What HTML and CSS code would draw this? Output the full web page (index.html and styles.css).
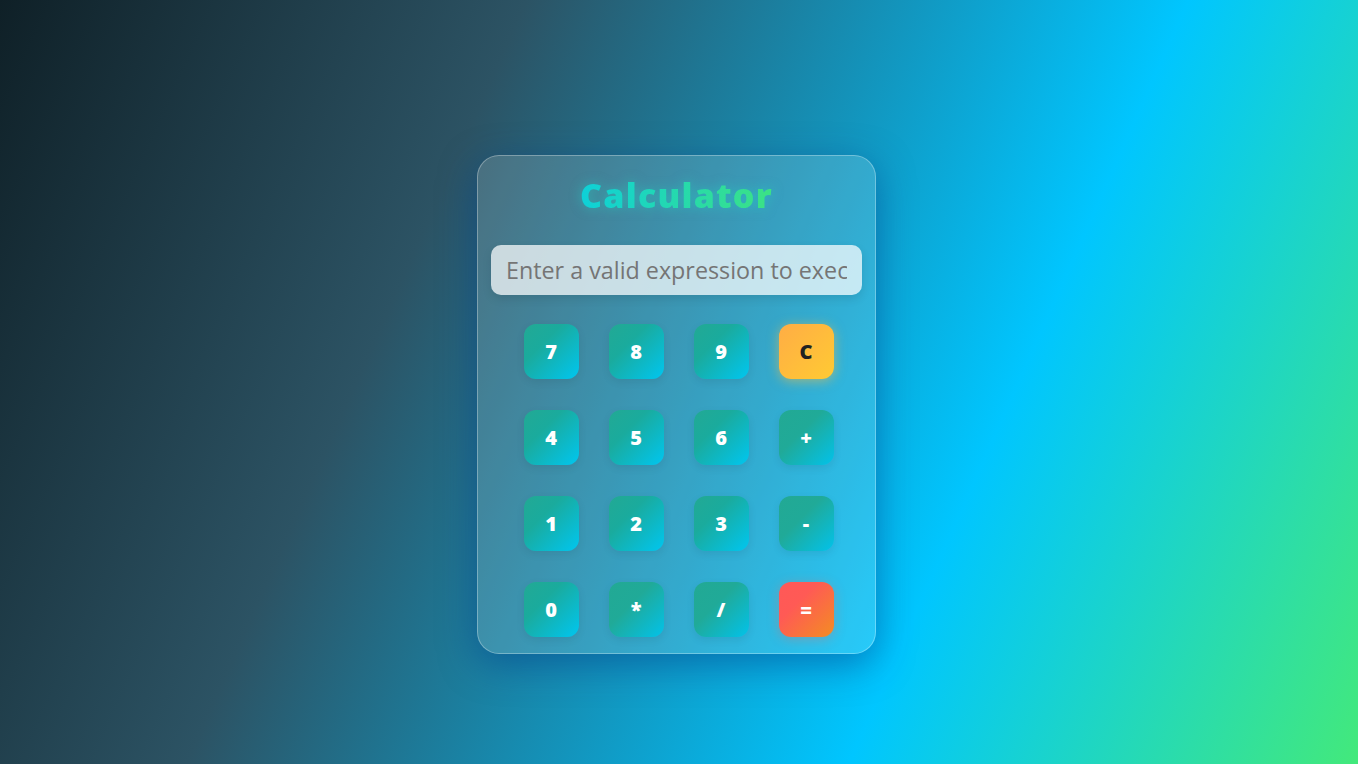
FILE: index.html
```html
<!DOCTYPE html>
<html lang="en">
<head>
<meta charset="UTF-8">
<title>Calculator</title>
<link rel="stylesheet" href="styles.css">
</head>
<body>
<main class="stage">
  <section class="calc">
    <h1 class="calc-title">Calculator</h1>
    <input class="calc-display" type="text" placeholder="Enter a valid expression to execute">
    <div class="keys">
      <button class="key">7</button>
      <button class="key">8</button>
      <button class="key">9</button>
      <button class="key key-clear">C</button>
      <button class="key">4</button>
      <button class="key">5</button>
      <button class="key">6</button>
      <button class="key key-op">+</button>
      <button class="key">1</button>
      <button class="key">2</button>
      <button class="key">3</button>
      <button class="key key-op">-</button>
      <button class="key">0</button>
      <button class="key key-op">*</button>
      <button class="key key-op">/</button>
      <button class="key key-equals">=</button>
    </div>
  </section>
</main>
</body>
</html>
```

FILE: styles.css
```css
* { box-sizing: border-box; }

html, body {
  margin: 0;
  height: 100%;
}

body {
  font-family: "Open Sans", "Noto Sans", sans-serif;
  background: linear-gradient(114deg, #0f2027 0%, #2c5364 31%, #00c6ff 70%, #43e97b 100%);
  overflow: hidden;
}

.stage {
  height: 100%;
  padding: 44px 5px 0 0;
  display: flex;
  align-items: center;
  justify-content: center;
}

.calc {
  width: 399px;
  padding: 19px 13px 16px;
  border-radius: 22px;
  background: rgba(255, 255, 255, 0.15);
  border: 1px solid rgba(255, 255, 255, 0.3);
  box-shadow: 0 10px 36px rgba(0, 60, 140, 0.5);
  display: flex;
  flex-direction: column;
  align-items: stretch;
}

.calc-title {
  margin: 0 0 30px;
  height: 40px;
  line-height: 40px;
  text-align: center;
  font-size: 34px;
  font-weight: 800;
  letter-spacing: 1.2px;
  background: linear-gradient(90deg, #0ed0d8, #3ce284);
  -webkit-background-clip: text;
  background-clip: text;
  color: transparent;
  -webkit-text-fill-color: transparent;
  filter: drop-shadow(0 0 6px rgba(30, 220, 200, 0.5));
  align-self: center;
}

.calc-display {
  height: 50px;
  width: 100%;
  border: none;
  outline: none;
  border-radius: 10px;
  padding: 0 15px;
  font-family: "Open Sans", "Noto Sans", sans-serif;
  font-size: 23.3px;
  color: #333;
  background: rgba(255, 255, 255, 0.72);
  box-shadow: 0 4px 10px rgba(0, 0, 0, 0.1);
}

.calc-display::placeholder {
  color: #757575;
}

.keys {
  margin-top: 29px;
  padding-left: 4px;
  display: grid;
  grid-template-columns: repeat(4, 55px);
  grid-auto-rows: 55px;
  column-gap: 30px;
  row-gap: 31px;
  justify-content: center;
}

.key {
  border: none;
  border-radius: 12px;
  font-family: "Open Sans", "Noto Sans", sans-serif;
  font-size: 20px;
  font-weight: 800;
  color: #ffffff;
  background: linear-gradient(135deg, #22a994 0%, #1aab9d 35%, #00c6f0 100%);
  box-shadow: 0 3px 8px rgba(0, 0, 0, 0.08);
  padding: 0;
  cursor: pointer;
}

.key-op {
  background: linear-gradient(135deg, #22a994 0%, #20aa98 40%, #02c2ea 100%);
}

.key-clear {
  color: #222;
  background: linear-gradient(135deg, #ffad45, #ffca33);
  box-shadow: 0 2px 12px rgba(255, 190, 60, 0.55);
}

.key-equals {
  background: linear-gradient(135deg, #ff5858 0%, #ff5a55 35%, #f38d22 100%);
  box-shadow: 0 2px 12px rgba(255, 100, 80, 0.35);
}
```
